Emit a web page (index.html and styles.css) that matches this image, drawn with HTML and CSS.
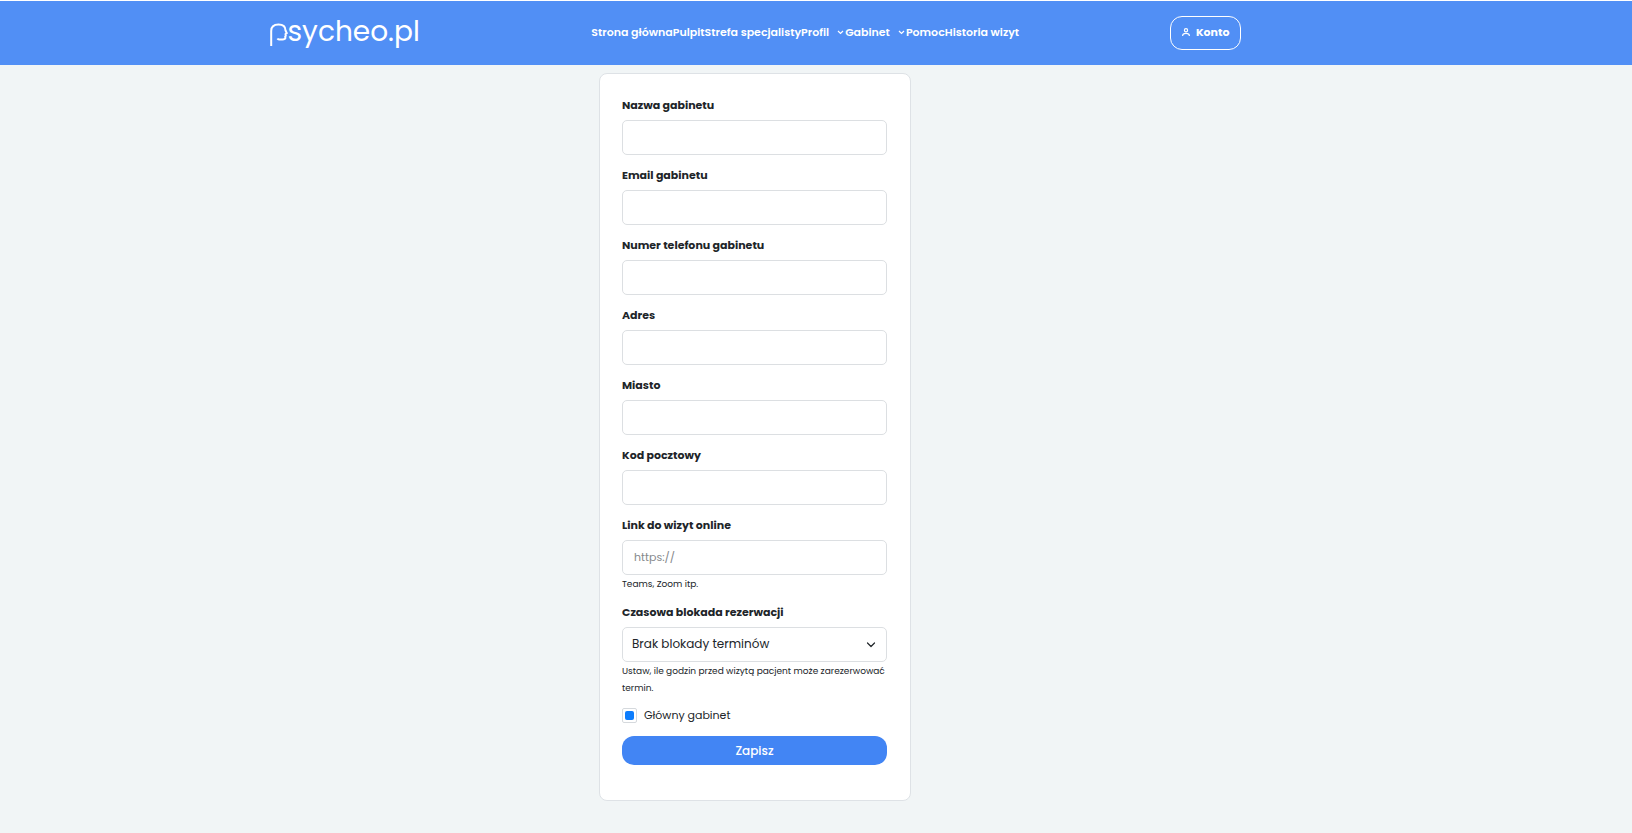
FILE: index.html
```html
<!DOCTYPE html>
<html lang="pl">
<head>
<meta charset="utf-8">
<meta name="viewport" content="width=device-width, initial-scale=1">
<title>psycheo.pl</title>
<link rel="stylesheet" href="styles.css">
</head>
<body>
<header class="topbar">
  <div class="topbar-inner">
    <a class="logo" href="#" aria-label="psycheo.pl">
      <svg class="logo-mark" width="18" height="30" viewBox="0 0 18 30" fill="none" stroke="currentColor" stroke-width="2" stroke-linejoin="round" aria-hidden="true"><path d="M1.200 29V14C1.200 9.500 4 7.500 8.500 7.500c4.500 0 7 2.500 7 6l1.300 2.700-1.300.8.300 1.700-.6.900.2 1.500c-.3 1.200-1.400 1.300-2.800 1.300H9c-.8 0-1.300-.3-1.600-.8"/></svg>
      <span class="logo-text">sycheo.pl</span>
    </a>
    <nav class="nav">
      <a href="#">Strona główna</a>
      <a href="#">Pulpit</a>
      <a href="#">Strefa specjalisty</a>
      <a class="has-menu" href="#">Profil <svg width="7" height="5" viewBox="0 0 7 5" fill="none" stroke="currentColor" stroke-width="1.200"><path d="M1 1l2.500 2.500L6 1"/></svg></a>
      <a class="has-menu" href="#">Gabinet <svg width="7" height="5" viewBox="0 0 7 5" fill="none" stroke="currentColor" stroke-width="1.200"><path d="M1 1l2.500 2.500L6 1"/></svg></a>
      <a href="#">Pomoc</a>
      <a href="#">Historia wizyt</a>
    </nav>
    <button class="account" type="button">
      <svg width="8" height="8" viewBox="0 0 8 8" fill="none" stroke="currentColor" stroke-width="1.200"><circle cx="4" cy="2.200" r="1.600"/><path d="M.6 8C.6 6.300 2 5.400 4 5.400S7.400 6.300 7.400 8"/></svg>
      Konto
    </button>
  </div>
</header>
<main class="page">
  <form class="card">
    <div class="field"><label for="name">Nazwa gabinetu</label><input class="control" id="name" type="text"></div>
    <div class="field"><label for="email">Email gabinetu</label><input class="control" id="email" type="email"></div>
    <div class="field"><label for="phone">Numer telefonu gabinetu</label><input class="control" id="phone" type="tel"></div>
    <div class="field"><label for="address">Adres</label><input class="control" id="address" type="text"></div>
    <div class="field"><label for="city">Miasto</label><input class="control" id="city" type="text"></div>
    <div class="field"><label for="zip">Kod pocztowy</label><input class="control" id="zip" type="text"></div>
    <div class="field"><label for="link">Link do wizyt online</label><input class="control" id="link" type="url" placeholder="https://"><p class="help">Teams, Zoom itp.</p></div>
    <div class="field">
      <label for="block">Czasowa blokada rezerwacji</label>
      <div class="select-wrap">
        <select class="control" id="block"><option>Brak blokady terminów</option></select>
        <svg class="select-arrow" width="10" height="6" viewBox="0 0 10 6" fill="none" stroke="currentColor" stroke-width="1.200" stroke-linecap="round" stroke-linejoin="round"><path d="M1.500 1L5 4.500 8.500 1"/></svg>
      </div>
      <p class="help">Ustaw, ile godzin przed wizytą pacjent może zarezerwować termin.</p>
    </div>
    <div class="check"><input id="main" type="checkbox" checked><label for="main">Główny gabinet</label></div>
    <button class="save" type="submit">Zapisz</button>
  </form>
</main>
</body>
</html>
```
FILE: styles.css
```css
* { box-sizing: border-box; }

body {
  margin: 0;
  min-height: 100vh;
  background: #f1f5f6;
  color: #212529;
  font-family: Poppins, Inter, sans-serif;
  font-size: 12px;
}

button, input, select { font: inherit; color: inherit; }

.topbar {
  padding-right: 122px;
  border-top: 1px solid #fff;
  background: #518ff5;
  color: #fff;
}

.topbar-inner {
  display: flex;
  align-items: center;
  justify-content: space-between;
  max-width: 971px;
  min-height: 64px;
  margin: 0 auto;
}

.topbar a { color: inherit; text-decoration: none; }

.logo {
  display: flex;
  align-items: center;
  width: 171px;
  padding-bottom: 2px;
}

.logo-mark { flex: none; }

.logo-text {
  font-family: "Century Gothic", Poppins, sans-serif;
  font-size: 28px;
  font-weight: 400;
  line-height: 32px;
}

.nav {
  display: flex;
  padding-bottom: 2px;
  font-size: 11px;
  font-weight: 600;
  white-space: nowrap;
}

.has-menu {
  display: flex;
  align-items: center;
  gap: 8px;
  padding-right: 1px;
}

.account {
  display: flex;
  align-items: center;
  gap: 6px;
  height: 34px;
  padding: 0 10px 2px 11px;
  border: 1px solid #fff;
  border-radius: 12px;
  background: transparent;
  font-size: 11px;
  font-weight: 700;
}

.page { padding: 8px 122px 24px 0; }

.card {
  display: flex;
  flex-direction: column;
  gap: 10px;
  width: 100%;
  max-width: 312px;
  margin: 0 auto;
  padding: 21px 23px 35px 22px;
  border: 1px solid #dee2e6;
  border-radius: 8px;
  background: #fff;
}

.field label {
  display: block;
  margin-bottom: 5px;
  font-size: 11px;
  font-weight: 700;
  line-height: 20px;
}

.control {
  display: block;
  width: 100%;
  height: 35px;
  padding: 0 11px;
  border: 1px solid #dcdfe2;
  border-radius: 5px;
  background: #fff;
  font-size: 11px;
}

.control::placeholder { color: #85888b; opacity: 1; }

.select-wrap { position: relative; }

select.control {
  padding: 0 30px 2px 9px;
  appearance: none;
  font-size: 12px;
}

.select-arrow {
  position: absolute;
  top: 15px;
  right: 11px;
  pointer-events: none;
}

.help {
  margin: 1px 0 -1px;
  font-size: 9px;
  line-height: 17px;
}

.check {
  display: flex;
  align-items: center;
  gap: 7px;
  margin: 2px 0 3px;
  line-height: 15px;
}

.check input {
  display: grid;
  place-content: center;
  width: 15px;
  height: 15px;
  margin: 0;
  border: 1px solid #d5d9dd;
  border-radius: 2px;
  background: #fff;
  appearance: none;
}

.check input:checked::before {
  width: 9px;
  height: 9px;
  border-radius: 2px;
  background: #0d7dfd;
  content: "";
}

.check label { font-size: 11px; }

.save {
  height: 29px;
  padding: 0;
  border: 0;
  border-radius: 12px;
  background: #4285f4;
  color: #fff;
  font-weight: 500;
}
```
